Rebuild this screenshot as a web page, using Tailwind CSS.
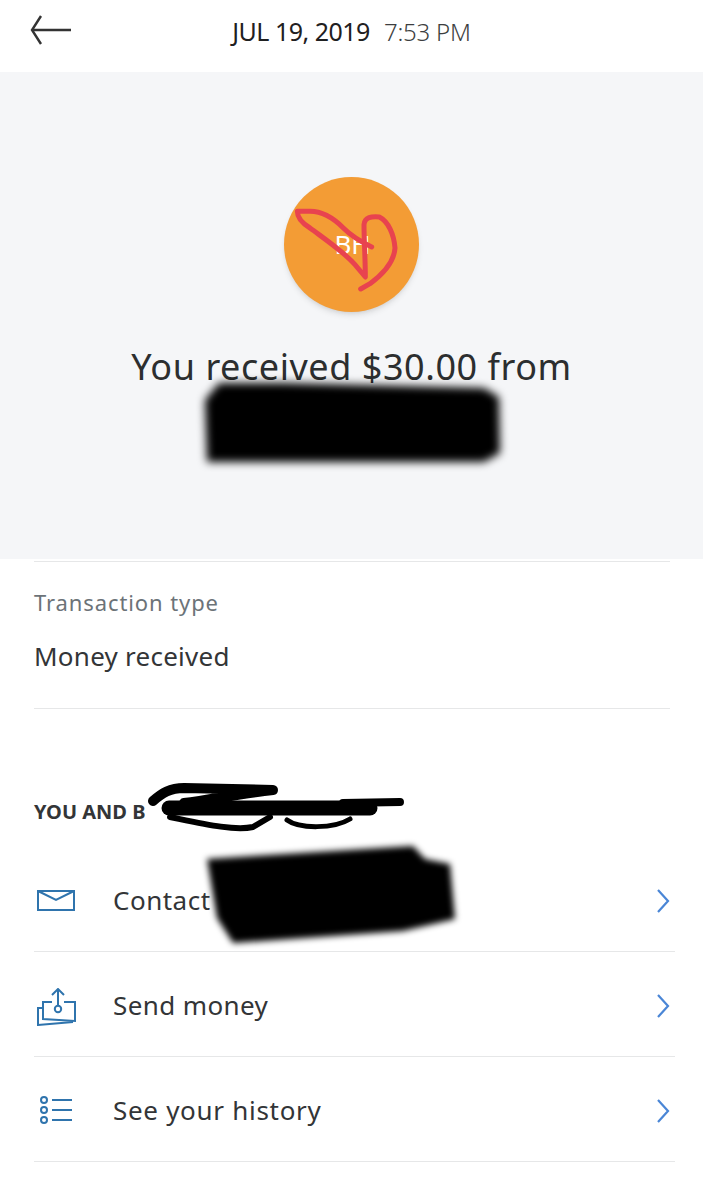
<!DOCTYPE html>
<html>
<head>
<meta charset="utf-8">
<title>Transaction details</title>
<script src="https://cdn.jsdelivr.net/npm/@tailwindcss/browser@4"></script>
</head>
<body class="bg-white">
<div class="w-[703px] h-[1200px] overflow-hidden bg-white text-[#333537] font-['Noto_Sans',sans-serif]">

    <!-- Header -->
    <div class="relative h-[72px] flex justify-center items-center">
        <svg class="absolute left-[30px] top-[13px] w-[42px] h-[34px]" viewBox="0 0 42 34" fill="none" stroke="#333" stroke-width="2.4">
            <path d="M11 3 L2 17 L11 31"/>
            <path d="M2 17 H41"/>
        </svg>
        <div class="flex items-baseline gap-[14px] mt-[-8px]">
            <span class="text-[25px] tracking-[-0.5px] text-[#1f2021]">JUL 19, 2019</span>
            <span class="text-[24px] font-light tracking-[-0.2px] text-[#3c3e40]">7:53 PM</span>
        </div>
    </div>

    <!-- Summary -->
    <div class="h-[487px] bg-[#f5f6f8] flex flex-col items-center pt-[105px]">
        <div class="relative w-[135px] h-[135px] rounded-full bg-[#f39c35] shadow-md flex items-center justify-center">
            <span class="text-white text-[26px] ml-[2px]">BH</span>
            <svg class="absolute inset-0 w-[135px] h-[135px]" viewBox="72 52 405 405" fill="none" stroke="#e8434f" stroke-width="15" stroke-linecap="round" stroke-linejoin="round">
                <path d="M335 262 C300 245 270 225 250 205 C220 175 190 155 150 155 L112 155 C112 175 125 190 150 205 C190 235 250 275 285 315 L316 352 C316 300 312 240 312 195 C314 172 335 170 358 172 C385 185 402 225 405 265 C402 310 360 350 330 372 L302 388"/>
            </svg>
        </div>
        <h1 class="mt-[33px] text-[36px] leading-[44px] tracking-[0.55px] text-[#2c2e2f]">You received $30.00 from</h1>
        <svg class="mt-[-12px] w-[304px] h-[91px] blur-[4px]" viewBox="0 0 304 91" fill="black">
            <path d="M19 6 L84 6 L284 11 L299 20 L300 76 L284 85 L7 85 L5 23 Z"/>
        </svg>
    </div>

    <!-- Transaction type -->
    <div class="mx-[34px] w-[636px] mt-[2px] border-t border-[#e6e7e8] border-b pt-[25px] pb-[37px]">
        <div class="text-[22px] leading-[30px] text-[#6c7378] tracking-[0.9px]">Transaction type</div>
        <div class="mt-[24px] text-[26px] leading-[30px] tracking-[0.25px]">Money received</div>
    </div>

    <!-- You and ... -->
    <div class="relative mt-[88px] ml-[34px] text-[20px] leading-[30px] font-bold text-[#333537]">
        YOU AND B
        <svg class="absolute left-[100px] top-[-16px] w-[280px] h-[60px]" viewBox="0 0 280 60" fill="none" stroke="black" stroke-linecap="round" stroke-linejoin="round">
            <path stroke-width="10" d="M19 20 C28 12 36 7 50 7 L139 9 C110 12 80 18 50 22"/>
            <path stroke-width="15" d="M35 27 L236 27"/>
            <path stroke-width="8" d="M209 22 L266 21"/>
            <path stroke-width="6" d="M36 36 C70 43 100 50 119 46 L136 36"/>
            <path stroke-width="5" d="M153 39 C165 48 200 48 216 38"/>
        </svg>
    </div>

    <ul class="ml-[34px] w-[641px] mt-[20px]">
        <!-- Contact -->
        <li class="relative h-[105px] flex items-center border-b border-[#e6e7e8] pt-[2px]">
            <svg class="w-[38px] h-[22px] ml-[3px]" viewBox="0 0 38 22" fill="none" stroke="#2f74ad" stroke-width="2">
                <path d="M1 2 V21 H37 V2 Z"/>
                <path d="M1 2 L19 11 L37 2"/>
            </svg>
            <span class="ml-[38px] text-[26px] tracking-[0.5px]">Contact</span>
            <svg class="absolute right-[5px] top-[42px] w-[14px] h-[24px]" viewBox="0 0 14 24" fill="none" stroke="#4a86d6" stroke-width="2.2"><path d="M2 1 L12 12 L2 23"/></svg>
            <svg class="absolute left-[170px] top-[-6px] w-[256px] h-[106px] blur-[3px]" viewBox="0 0 256 106" fill="black">
                <path d="M3 18 L209 5 L221 18 L246 23 L251 78 L199 90 L29 102 L13 77 Z"/>
            </svg>
        </li>
        <!-- Send money -->
        <li class="relative h-[105px] flex items-center border-b border-[#e6e7e8]">
            <svg class="w-[40px] h-[38px] ml-[3px] mt-[6px]" viewBox="0 0 40 38" fill="none" stroke="#2f74ad" stroke-width="2">
                <path d="M21 1 V18"/>
                <path d="M15 7 L21 1 L27 7"/>
                <circle cx="21" cy="21" r="3.2"/>
                <path d="M15 14 H6 V31 L38 33 V14 H27"/>
                <path d="M6 20 H1 V37 L36 34"/>
            </svg>
            <span class="ml-[36px] text-[26px] tracking-[0.4px] mt-[2px]">Send money</span>
            <svg class="absolute right-[5px] top-[42px] w-[14px] h-[24px]" viewBox="0 0 14 24" fill="none" stroke="#4a86d6" stroke-width="2.2"><path d="M2 1 L12 12 L2 23"/></svg>
        </li>
        <!-- See your history -->
        <li class="relative h-[105px] flex items-center border-b border-[#e6e7e8]">
            <svg class="w-[34px] h-[28px] ml-[6px] mt-[2px]" viewBox="0 0 34 28" fill="none" stroke="#2f74ad" stroke-width="2">
                <circle cx="4" cy="4" r="3"/>
                <circle cx="4" cy="14" r="3"/>
                <circle cx="4" cy="24" r="3"/>
                <path d="M12 4 H32 M12 14 H32 M12 24 H32"/>
            </svg>
            <span class="ml-[39px] text-[26px] tracking-[0.7px] mt-[2px]">See your history</span>
            <svg class="absolute right-[5px] top-[42px] w-[14px] h-[24px]" viewBox="0 0 14 24" fill="none" stroke="#4a86d6" stroke-width="2.2"><path d="M2 1 L12 12 L2 23"/></svg>
        </li>
    </ul>
</div>
</body>
</html>
